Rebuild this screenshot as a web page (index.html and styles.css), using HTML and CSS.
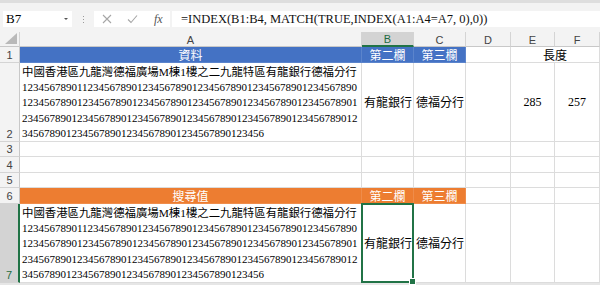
FILE: index.html
```html
<!DOCTYPE html>
<html lang="zh-Hant">
<head>
  <meta charset="UTF-8">
  <title>INDEX MATCH</title>
  <link rel="stylesheet" href="styles.css">
</head>
<body>

  <!-- formula bar -->
  <div class="toolbar">
    <div class="namebox">B7<span class="caret"></span></div>
    <div class="grip"><i></i><i></i><i></i></div>
    <div class="fnbtns">
      <svg width="10" height="10" viewBox="0 0 10 10"><path d="M1 1L9 9M9 1L1 9" stroke="#a6a6a6" stroke-width="1.1" fill="none"/></svg>
      <svg width="11" height="10" viewBox="0 0 11 10"><path d="M1 5.5L4 8.5L10 1.5" stroke="#a6a6a6" stroke-width="1.1" fill="none"/></svg>
      <span class="fx">fx</span>
    </div>
    <div class="formula">=INDEX(B1:B4, MATCH(TRUE,INDEX(A1:A4=A7, 0),0))</div>
  </div>

  <div class="sheet">
    <!-- column headers -->
    <div class="corner"><span class="tri"></span></div>
    <div class="hd">A</div>
    <div class="hd active">B</div>
    <div class="hd">C</div>
    <div class="hd">D</div>
    <div class="hd">E</div>
    <div class="hd">F</div>

    <!-- row 1 -->
    <div class="rh mid">1</div>
    <div class="cell head blue">資料</div>
    <div class="cell head blue">第二欄</div>
    <div class="cell head blue">第三欄</div>
    <div class="cell"></div>
    <div class="cell head span2">長度</div>

    <!-- row 2 -->
    <div class="rh">2</div>
    <div class="cell txt">
      <span class="zh">中國香港區九龍灣德福廣場M棟1樓之二九龍特區有龍銀行德福分行</span><br>
      1234567890112345678901234567890123456789012345678901234567890<br>
      1234567890123456789012345678901234567890123456789012345678901<br>
      2345678901234567890123456789012345678901234567890123456789012<br>
      34567890123456789012345678901234567890123456
    </div>
    <div class="cell vc">有龍銀行</div>
    <div class="cell vc">德福分行</div>
    <div class="cell"></div>
    <div class="cell vc num">285</div>
    <div class="cell vc num">257</div>

    <!-- rows 3-5 -->
    <div class="rh">3</div>
    <div class="cell"></div><div class="cell"></div><div class="cell"></div>
    <div class="cell"></div><div class="cell"></div><div class="cell"></div>
    <div class="rh">4</div>
    <div class="cell"></div><div class="cell"></div><div class="cell"></div>
    <div class="cell"></div><div class="cell"></div><div class="cell"></div>
    <div class="rh">5</div>
    <div class="cell"></div><div class="cell"></div><div class="cell"></div>
    <div class="cell"></div><div class="cell"></div><div class="cell"></div>

    <!-- row 6 -->
    <div class="rh">6</div>
    <div class="cell head orange">搜尋值</div>
    <div class="cell head orange">第二欄</div>
    <div class="cell head orange">第三欄</div>
    <div class="cell"></div>
    <div class="cell"></div>
    <div class="cell"></div>

    <!-- row 7 -->
    <div class="rh active">7</div>
    <div class="cell txt">
      <span class="zh">中國香港區九龍灣德福廣場M棟1樓之二九龍特區有龍銀行德福分行</span><br>
      1234567890112345678901234567890123456789012345678901234567890<br>
      1234567890123456789012345678901234567890123456789012345678901<br>
      2345678901234567890123456789012345678901234567890123456789012<br>
      34567890123456789012345678901234567890123456
    </div>
    <div class="cell vc sel">有龍銀行</div>
    <div class="cell vc">德福分行</div>
    <div class="cell"></div>
    <div class="cell"></div>
    <div class="cell"></div>
  </div>

</body>
</html>
```

FILE: styles.css
```css
* { box-sizing: border-box; }
body {
  margin: 0;
  width: 600px;
  height: 285px;
  overflow: hidden;
  background-color: #e6e6e6;
  font-family: "Liberation Serif", "Noto Sans CJK TC", serif;
}

/* formula bar */
.toolbar {
  height: 32px;
  background-color: #f3f3f3;
  border-top: 3px solid #dedede;
  display: flex;
  align-items: flex-start;
  padding: 8px 0 0 3px;
}
.namebox {
  width: 69px;
  height: 16px;
  background: white;
  font-size: 13px;
  line-height: 16px;
  padding-left: 3px;
  display: flex;
  justify-content: space-between;
  align-items: center;
}
.caret {
  width: 0;
  height: 0;
  margin-right: 4px;
  border-left: 2px solid transparent;
  border-right: 2px solid transparent;
  border-top: 2px solid #555;
}
.grip {
  width: 22px;
  height: 16px;
  display: flex;
  flex-direction: column;
  align-items: center;
  justify-content: center;
  gap: 2px;
}
.grip i {
  width: 1px;
  height: 1px;
  background: #9a9a9a;
  display: block;
}
.fnbtns {
  width: 76px;
  height: 16px;
  background: white;
  display: flex;
  align-items: center;
  gap: 15px;
  padding-left: 8px;
}
.fx {
  font-style: italic;
  font-size: 12px;
  color: #555;
  margin-left: 1px;
}
.formula {
  flex: 1;
  height: 16px;
  margin-left: 2px;
  background: white;
  font-size: 12.5px;
  line-height: 16px;
  padding-left: 9px;
  white-space: nowrap;
  color: #111;
}

/* sheet grid */
.sheet {
  display: grid;
  grid-template-columns: 20px 342px 52px 52px 45px 44px 45px;
  grid-template-rows: 15px 16px 79px 15px 16px 15px 16px 79px;
  background: white;
}
.corner {
  background: #f3f3f3;
  border-right: 1px solid #d4d4d4;
  border-bottom: 1px solid #c8c8c8;
  display: flex;
  align-items: flex-end;
  justify-content: flex-end;
  padding: 0 2px 2px 0;
}
.tri {
  width: 12px;
  height: 11px;
  background: #b9b9b9;
  clip-path: polygon(100% 0, 100% 100%, 0 100%);
}
.hd {
  background: #f3f3f3;
  border-right: 1px solid #d4d4d4;
  border-bottom: 1px solid #c8c8c8;
  font-family: "Liberation Sans", sans-serif;
  font-size: 11px;
  color: #444;
  display: flex;
  align-items: center;
  justify-content: center;
  padding-top: 1px;
}
.hd.active {
  background: #d3d3d3;
  color: #1e6b41;
  border-bottom: 2px solid #217346;
}
.rh {
  background: #f3f3f3;
  border-right: 1px solid #c8c8c8;
  border-bottom: 1px solid #d4d4d4;
  font-family: "Liberation Sans", sans-serif;
  font-size: 11px;
  color: #444;
  display: flex;
  align-items: flex-end;
  justify-content: center;
  padding-bottom: 1px;
}
.rh.mid { align-items: center; padding-bottom: 0; }
.rh.active {
  background: #d3d3d3;
  color: #1e6b41;
  border-right: 2px solid #217346;
}

.cell {
  border-right: 1px solid #dcdcdc;
  border-bottom: 1px solid #dcdcdc;
  font-size: 12px;
  color: #000;
  padding: 0 2px;
  display: flex;
  align-items: center;
  white-space: nowrap;
  position: relative;
}
.head { justify-content: center; }
.blue { background: #4472c4; color: white; border-color: #5b84cc; }
.orange { background: #ed7d31; color: white; border-color: #ef8c4a; }
.span2 { grid-column: span 2; }
.num { justify-content: center; }
.txt {
  display: block;
  font-size: 11px;
  line-height: 15.2px;
  padding-top: 2px;
}
.zh { font-size: 11.4px; }

/* selected cell B7 */
.sel::after {
  content: "";
  position: absolute;
  top: -1px;
  left: -1px;
  right: -1px;
  bottom: -1px;
  border: 2px solid #217346;
}
.sel::before {
  content: "";
  position: absolute;
  right: -3px;
  bottom: -3px;
  width: 5px;
  height: 5px;
  background: #217346;
  border: 1px solid white;
  z-index: 1;
}
```
